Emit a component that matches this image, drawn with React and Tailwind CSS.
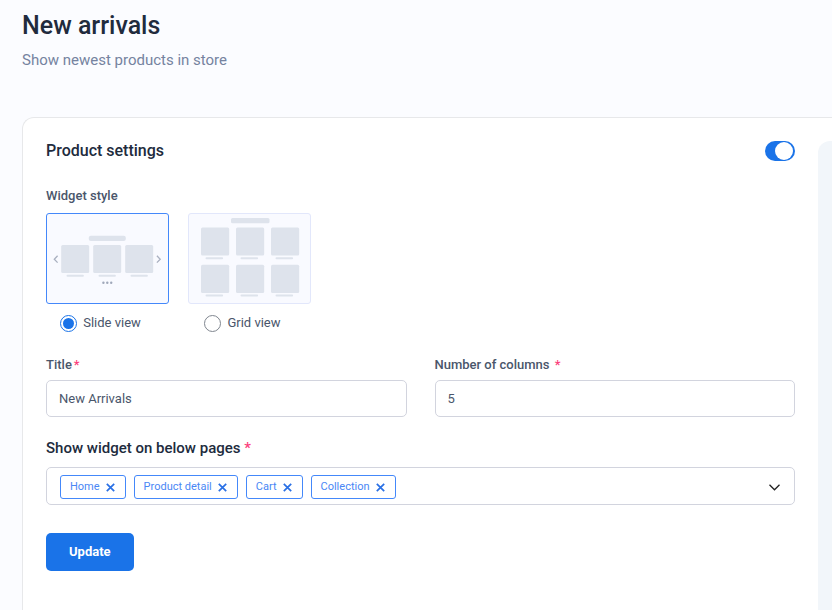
import React, { useState } from "react";

const ALL_PAGES = ["Home", "Product detail", "Cart", "Collection"];

function SlidePreview() {
  return (
    <svg viewBox="0 0 121 89" className="block h-[89px] w-full" fill="none" aria-hidden="true">
      <rect x="41.8" y="21.8" width="37" height="5.2" rx="2" fill="#dee3ec" />
      {[14.2, 46.2, 78.2].map((x) => (
        <g key={x} fill="#dee3ec">
          <rect x={x} y="31" width="28" height="28" rx="1.5" />
          <rect x={x + 5.3} y="60.8" width="17.4" height="2" rx="1" />
        </g>
      ))}
      <path d="M10.6 41.8 L7.3 45.2 L10.6 48.6 M109.9 41.8 L113.2 45.2 L109.9 48.6" stroke="#a9b0c0" strokeWidth="1.3" />
      <g fill="#a0a8ba">
        <circle cx="56.4" cy="68.7" r="1.2" />
        <circle cx="60.3" cy="68.7" r="1.2" />
        <circle cx="64.2" cy="68.7" r="1.2" />
      </g>
    </svg>
  );
}

function GridPreview() {
  return (
    <svg viewBox="0 0 121 89" className="block h-[89px] w-full" aria-hidden="true">
      <rect x="42" y="4" width="38.5" height="5.2" rx="1.5" fill="#dee3ec" />
      {[13.4, 50.8].map((y) =>
        [12, 47, 82].map((x) => (
          <g key={`${x}-${y}`} fill="#dee3ec">
            <rect x={x} y={y} width="28.2" height="28.2" rx="1.5" />
            <rect x={x + 4.5} y={y + 29.8} width="17.6" height="2" rx="1" />
          </g>
        ))
      )}
    </svg>
  );
}

function ViewOption({ value, label, checked, onChange, children }) {
  return (
    <label className="block cursor-pointer">
      <div
        className={`w-[123px] rounded-[3px] border bg-[#f9faff] ${
          checked ? "border-[#4488fa]" : "border-[#e2e7fb]"
        }`}
      >
        {children}
      </div>
      <span className="mt-[9px] flex items-center justify-center gap-1.5 pr-3.5 text-[13px] leading-5 text-[#4a566b]">
        <input
          type="radio"
          name="view"
          value={value}
          checked={checked}
          onChange={onChange}
          className="h-[17px] w-[17px] appearance-none rounded-full border border-[#80868f] bg-white p-0.5 checked:border-[#1a73e8] checked:bg-[#1a73e8] checked:bg-clip-content"
        />
        {label}
      </span>
    </label>
  );
}

function Chip({ name, onRemove }) {
  return (
    <span className="flex h-6 items-center gap-1.5 rounded-[3px] border border-[#4488fa] pr-2.5 pl-[9px] text-[11px] leading-4 text-[#4a87f5]">
      {name}
      <button type="button" aria-label={`Remove ${name}`} onClick={onRemove} className="cursor-pointer">
        <svg viewBox="0 0 9 9" className="h-[9px] w-[9px]" fill="none" stroke="#2a70e5" strokeWidth="1.7">
          <path d="M0.8 0.8 L8.2 8.2 M8.2 0.8 L0.8 8.2" />
        </svg>
      </button>
    </span>
  );
}

export default function App() {
  const [enabled, setEnabled] = useState(true);
  const [view, setView] = useState("slide");
  const [title, setTitle] = useState("New Arrivals");
  const [columns, setColumns] = useState("5");
  const [pages, setPages] = useState(ALL_PAGES);

  const labelClass = "block text-[13px] leading-5 font-medium text-[#4a566b]";
  const inputClass =
    "mt-[5px] block h-[37px] w-full rounded-[5px] border border-[#d2d4de] bg-white px-3 text-[13px] text-[#4a566b] outline-none focus:border-[#4488fa]";

  return (
    <div className="flex min-h-screen flex-col bg-[#fbfcff] pl-[22px] font-[Roboto,sans-serif]">
      {/* Page heading */}
      <header className="pt-2.5">
        <h1 className="text-[25px] leading-8 font-medium text-[#212b3d]">New arrivals</h1>
        <p className="mt-2 text-[15px] leading-5 text-[#7583a0]">Show newest products in store</p>
      </header>

      {/* Settings card */}
      <main className="mt-[47px] flex flex-1 gap-[23px] rounded-tl-xl border-t border-l border-[#e7e8ea] bg-white pt-[23px] pl-[23px]">
        <form className="min-w-0 flex-1" onSubmit={(e) => e.preventDefault()}>
          <div className="flex items-center justify-between">
            <h2 className="text-base leading-5 font-medium text-[#212b3d]">Product settings</h2>
            <input
              type="checkbox"
              role="switch"
              aria-label="Enable widget"
              checked={enabled}
              onChange={(e) => setEnabled(e.target.checked)}
              className="flex h-5 w-[30px] cursor-pointer appearance-none items-center rounded-full bg-gray-300 px-0.5 before:h-[18px] before:w-[18px] before:rounded-full before:bg-white checked:justify-end checked:bg-[#1a73e8]"
            />
          </div>

          <fieldset className="mt-[25px]">
            <legend className={labelClass}>Widget style</legend>
            <div className="mt-[7px] flex gap-[19px]">
              <ViewOption
                value="slide"
                label="Slide view"
                checked={view === "slide"}
                onChange={() => setView("slide")}
              >
                <SlidePreview />
              </ViewOption>
              <ViewOption
                value="grid"
                label="Grid view"
                checked={view === "grid"}
                onChange={() => setView("grid")}
              >
                <GridPreview />
              </ViewOption>
            </div>
          </fieldset>

          <div className="mt-[22px] grid grid-cols-2 gap-7">
            <div>
              <label htmlFor="title" className={labelClass}>
                Title<span className="ml-0.5 text-[#fb3f7c]">*</span>
              </label>
              <input
                id="title"
                type="text"
                value={title}
                onChange={(e) => setTitle(e.target.value)}
                className={inputClass}
              />
            </div>
            <div>
              <label htmlFor="columns" className={labelClass}>
                Number of columns <span className="ml-0.5 text-[#fb3f7c]">*</span>
              </label>
              <input
                id="columns"
                type="text"
                inputMode="numeric"
                value={columns}
                onChange={(e) => setColumns(e.target.value)}
                className={inputClass}
              />
            </div>
          </div>

          {/* Page picker */}
          <h3 id="pages-label" className="mt-[21px] text-[15px] leading-5 font-medium text-[#212b3d]">
            Show widget on below pages <span className="text-[#fb3f7c]">*</span>
          </h3>
          <div
            role="group"
            aria-labelledby="pages-label"
            className="mt-[9px] flex min-h-[38px] items-center justify-between rounded-[5px] border border-[#d2d4de] bg-white pt-[7px] pr-3.5 pb-[5px] pl-[13px]"
          >
            <div className="flex flex-wrap gap-2">
              {pages.map((page) => (
                <Chip key={page} name={page} onRemove={() => setPages(pages.filter((p) => p !== page))} />
              ))}
            </div>
            <button
              type="button"
              aria-label="Select all pages"
              onClick={() => setPages(ALL_PAGES)}
              className="cursor-pointer"
            >
              <svg viewBox="0 0 11 7" className="h-[7px] w-[11px]" fill="none" stroke="#212121" strokeWidth="1.3">
                <path d="M0.5 0.8 L5.5 5.8 L10.5 0.8" />
              </svg>
            </button>
          </div>

          <button
            type="submit"
            className="mt-7 h-[38px] cursor-pointer rounded-[5px] bg-[#1a73e8] px-[23px] text-[13px] font-bold text-white hover:bg-[#1765cc]"
          >
            Update
          </button>
        </form>

        {/* Preview pane */}
        <aside className="w-3.5 rounded-tl-xl bg-[#f2f6fa]" />
      </main>
    </div>
  );
}
